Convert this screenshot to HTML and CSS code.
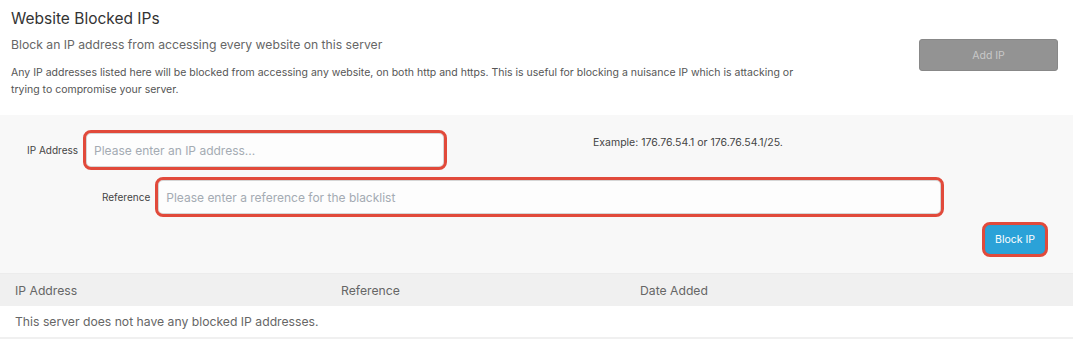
FILE: index.html
```html
<!DOCTYPE html>
<html lang="en">
<head>
    <meta charset="UTF-8">
    <meta name="viewport" content="width=device-width, initial-scale=1.0">
    <title>Website Blocked IPs</title>
    <link rel="stylesheet" href="styles.css">
</head>
<body>
    <div class="panel">
        <div class="panel-head">
            <div class="intro">
                <h1>Website Blocked IPs</h1>
                <p class="subtitle">Block an IP address from accessing every website on this server</p>
                <p class="desc">Any IP addresses listed here will be blocked from accessing any website, on both http and https. This is useful for blocking a nuisance IP which is attacking or trying to compromise your server.</p>
            </div>
            <button class="btn-add" disabled>Add IP</button>
        </div>

        <form class="block-form">
            <div class="row row-ip">
                <label for="ip">IP Address</label>
                <input type="text" id="ip" class="field field-ip" placeholder="Please enter an IP address...">
                <span class="hint">Example: 176.76.54.1 or 176.76.54.1/25.</span>
            </div>
            <div class="row row-ref">
                <label for="ref">Reference</label>
                <input type="text" id="ref" class="field field-ref" placeholder="Please enter a reference for the blacklist">
            </div>
            <div class="row row-actions">
                <button type="button" class="btn-block">Block IP</button>
            </div>
        </form>

        <table class="ip-table">
            <thead>
                <tr>
                    <th class="col-ip">IP Address</th>
                    <th class="col-ref">Reference</th>
                    <th>Date Added</th>
                </tr>
            </thead>
            <tbody>
                <tr>
                    <td colspan="3">This server does not have any blocked IP addresses.</td>
                </tr>
            </tbody>
        </table>
    </div>
</body>
</html>
```

FILE: styles.css
```css
body {
    margin: 0;
    font-family: 'Inter', 'Liberation Sans', sans-serif;
    background-color: white;
    color: #555;
}
.panel {
    width: 1073px;
}
.panel-head {
    display: flex;
    justify-content: space-between;
    align-items: flex-start;
    padding: 9px 15px 0 11px;
    height: 106px;
}
h1 {
    margin: 0;
    font-size: 15.5px;
    font-weight: 400;
    color: #333;
    line-height: 20px;
}
.subtitle {
    margin: 8px 0 0;
    font-size: 12.2px;
    color: #666;
    line-height: 16px;
}
.desc {
    margin: 11px 0 0;
    font-size: 10.5px;
    line-height: 17px;
    color: #555;
    max-width: 810px;
}
.btn-add {
    margin-top: 30px;
    width: 139px;
    height: 32px;
    border: 1px solid #888;
    border-radius: 3px;
    background-color: #939393;
    color: #c8c8c8;
    font-family: inherit;
    font-size: 10.5px;
}
.block-form {
    background-color: #f8f8f8;
    height: 158px;
    padding-top: 15px;
    box-sizing: border-box;
}
.row {
    display: flex;
    align-items: center;
}
label {
    font-size: 10px;
    color: #444;
    margin-right: 5px;
}
.row-ip {
    padding-left: 27px;
}
.row-ref {
    padding-left: 102px;
    margin-top: 7px;
}
.field {
    box-sizing: border-box;
    border: 3px solid #e14a3b;
    border-radius: 8px;
    background-color: #fdfdfd;
    box-shadow: inset 0 0 0 1px #d6d6d6;
    font-family: inherit;
    font-size: 12px;
    color: #333;
    padding: 0 8px;
    outline: none;
}
.field::placeholder {
    color: #a4abb3;
}
.field-ip {
    width: 364px;
    height: 40px;
}
.field-ref {
    width: 789px;
    height: 40px;
}
.hint {
    align-self: flex-start;
    margin: 6px 0 0 146px;
    font-size: 10.5px;
    color: #444;
}
.row-actions {
    justify-content: flex-end;
    padding-right: 25px;
    margin-top: 5px;
}
.btn-block {
    width: 66px;
    height: 35px;
    border: 3px solid #e14a3b;
    border-radius: 8px;
    background-color: #2ba2d8;
    box-shadow: inset 0 0 0 1px #2a9fd3;
    color: white;
    font-family: inherit;
    font-size: 10.5px;
}
.ip-table {
    width: 100%;
    border-collapse: collapse;
    font-size: 12.2px;
    color: #666;
}
.ip-table th {
    background-color: #f0f0f0;
    font-weight: 400;
    text-align: left;
    height: 32px;
    padding: 0 15px;
    border-top: 1px solid #ececec;
}
.ip-table .col-ip {
    width: 296px;
}
.ip-table .col-ref {
    width: 269px;
}
.ip-table td {
    height: 31px;
    padding: 0 15px;
    border-bottom: 2px solid #f0f0f0;
}
```
